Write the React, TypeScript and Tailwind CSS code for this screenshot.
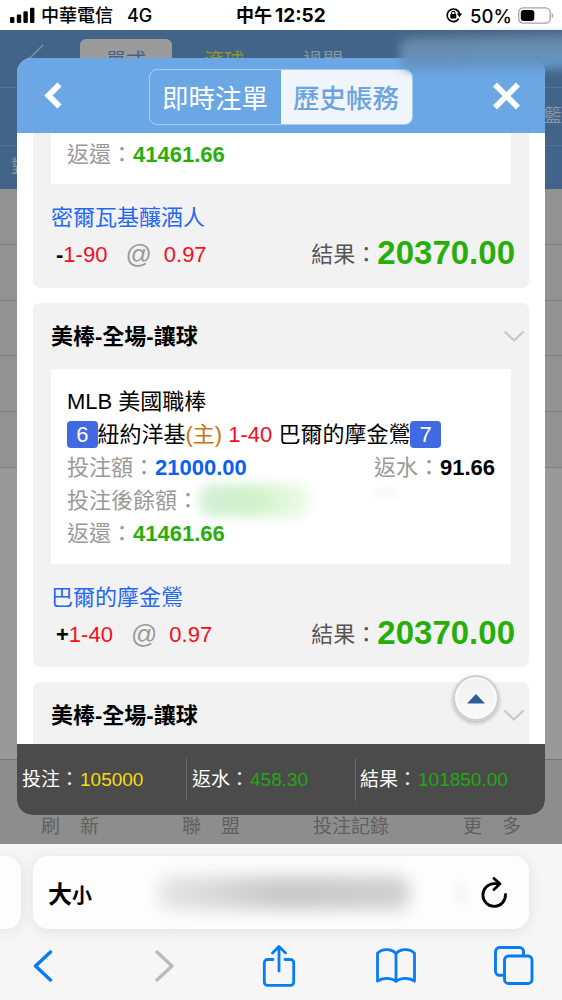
import type { ReactNode } from "react";

const TEXT = "font-['Liberation_Sans','Noto_Sans_CJK_TC',sans-serif]";
const SYSTEM = "font-['Inter','Noto_Sans_CJK_TC',sans-serif]";

type Bet = { team: string; sign: string; line: string; odds: string; result: string };

const BETS: Bet[] = [
  { team: "密爾瓦基釀酒人", sign: "-", line: "1-90", odds: "0.97", result: "20370.00" },
  { team: "巴爾的摩金鶯", sign: "+", line: "1-40", odds: "0.97", result: "20370.00" },
];

const TOTALS = [
  { label: "投注", value: "105000", color: "text-[#f5dc0c]", box: "w-[169px] pl-[5px]" },
  { label: "返水", value: "458.30", color: "text-[#22a811]", box: "w-[169px] pl-[5px] border-l border-[#686868]" },
  { label: "結果", value: "101850.00", color: "text-[#22a811]", box: "flex-1 pl-1 border-l border-[#686868]" },
];

function StatusBar() {
  return (
    <header className={`${SYSTEM} flex h-[30px] items-center bg-white text-[18px] leading-[30px] text-black`}>
      <div className="flex w-[236px] items-center pl-[10px]">
        <svg width="25" height="16" viewBox="0 0 25 16">
          <rect x="0" y="10" width="4.4" height="6" rx="1.2" />
          <rect x="6.8" y="7.5" width="4.4" height="8.5" rx="1.2" />
          <rect x="13.4" y="4.2" width="4.4" height="11.8" rx="1.2" />
          <rect x="20" y="0.8" width="4.4" height="15.2" rx="1.2" />
        </svg>
        <span className="ml-[6px] mt-[2px] font-medium">中華電信</span>
        <span className="ml-[14px] mt-[2px] font-medium">4G</span>
      </div>
      <div className="mt-[2px] flex w-[209px] items-center whitespace-nowrap">
        <span className="text-[18px] font-semibold">中午</span>
        <span className="ml-[3px] text-[19px] font-bold">12:52</span>
      </div>
      <svg width="18" height="16" viewBox="0 0 18 16" fill="none" stroke="black" strokeWidth="1.7">
        <path d="M13.700 11.800A6.300 6.300 0 1 1 14.600 7" />
        <path d="M11.800 6.500h5.400l-2.700 3.700z" fill="black" stroke="none" />
        <rect x="5.3" y="7" width="6" height="4.4" rx="0.7" fill="black" stroke="none" />
        <path d="M6.600 7.200V6a1.700 1.700 0 0 1 3.400 0v1.200" strokeWidth="1.1" />
      </svg>
      <span className="ml-[7px] mt-px w-[48px] text-[18.5px] font-medium">50%</span>
      <svg width="36" height="17" viewBox="0 0 36 17">
        <rect x="0.7" y="0.9" width="31.5" height="15.2" rx="4.6" fill="white" stroke="#a2a2a2" strokeWidth="1.3" />
        <rect x="2.8" y="2.9" width="13.5" height="11.2" rx="3" />
        <path d="M33.700 6v5.200c2-.8 2-4.400 0-5.200z" fill="#a2a2a2" />
      </svg>
    </header>
  );
}

function DimmedPage() {
  return (
    <div className={`${TEXT} flex h-[814px] flex-col bg-[#999]`}>
      <div className="flex h-[159px] flex-col bg-[#436489] text-[20px] text-[#8795a4]">
        <div className="flex h-[58px] border-b border-[#537394]">
          <svg className="ml-[26px] mt-[14px]" width="18" height="32" viewBox="0 0 18 32" fill="none" stroke="#7b91a8" strokeWidth="1.5">
            <path d="M17 1L2 16l15 15" />
          </svg>
          <div className="ml-[36px] mt-[9px] flex h-[40px] w-[92px] justify-center rounded-[6px] bg-[#9b9b9b] text-[#436489]">
            <span className="mt-[7px]">單式</span>
          </div>
          <span className="ml-[32px] mt-[16px] text-[#8f9921]">滾球</span>
          <span className="ml-[59px] mt-[16px]">過關</span>
        </div>
        <div className="flex h-[58px] items-center justify-end border-b border-[#537394] text-[18px]">籃</div>
        <div className="flex flex-1 items-center pl-[11px] text-[18px]">對</div>
      </div>
      <div className="h-[56px] border-b border-[#818181] bg-[#929292]" />
      <div className="h-[56px] border-b border-[#818181] bg-[#929292]" />
      <div className="h-[55px] border-b border-[#818181] bg-[#929292]" />
      <div className="h-[56px] border-b border-[#818181] bg-[#929292]" />
      <div className="h-[56px] border-b border-[#818181] bg-[#929292]" />
      <div className="flex-1" />
      <div className="flex h-[85px] items-end border-t border-[#737373] bg-[#8d8d8d] pb-[3px] text-[19px] leading-[28px] text-[#606060]">
        <span className="ml-[41px] w-[141px]">刷<span className="ml-[20px]">新</span></span>
        <span className="w-[131px]">聯<span className="ml-[20px]">盟</span></span>
        <span className="w-[150px]">投注記錄</span>
        <span>更<span className="ml-[20px]">多</span></span>
      </div>
    </div>
  );
}

function ModalHeader() {
  return (
    <div className="flex h-[75px] items-center bg-[#6ba7e5]">
      <svg className="ml-[27px]" width="19" height="27" viewBox="0 0 19 27" fill="none" stroke="white" strokeWidth="6">
        <path d="M15.500 2.500L4.500 13.500 15.500 24.500" />
      </svg>
      <div className="ml-[86px] mt-[2px] flex h-[56px] w-[264px] rounded-[8px] border border-[#a6cdf5] text-[26.5px] leading-[58px]">
        <div className="w-[131px] pl-[12px] text-white">即時注單</div>
        <div className="flex-1 rounded-r-[7px] bg-[#f0f5fb] pl-[12px] font-medium text-[#6ba4df]">歷史帳務</div>
      </div>
      <svg className="ml-[79px]" width="30" height="28" viewBox="0 0 30 28" fill="none" stroke="white" strokeWidth="5.6">
        <path d="M3 2.500l23 23M26 2.500l-23 23" />
      </svg>
    </div>
  );
}

function CardTitle() {
  return (
    <div className="flex h-[66px] items-center justify-between pl-[18px] pr-[4px] text-[22px] font-bold">
      <span>美棒-全場-讓球</span>
      <svg width="22" height="13" viewBox="0 0 22 13" fill="none" stroke="#c9c9c9" strokeWidth="2.3">
        <path d="M1.500 1.500L11 10.500l9.500-9" />
      </svg>
    </div>
  );
}

function Badge({ children }: { children: ReactNode }) {
  return (
    <span className="inline-block h-[27px] w-[30.5px] rounded-[4px] bg-[#4169e1] text-center leading-[27px] text-white">
      {children}
    </span>
  );
}

function Returned() {
  return (
    <div className="text-[#999]">
      返還：<b className="text-[#28ae0b]">41461.66</b>
    </div>
  );
}

function BetFooter({ bet }: { bet: Bet }) {
  return (
    <div className="px-[18px] pb-[17px] pt-[17px] leading-[33px]">
      <div className="text-[#2468f2]">{bet.team}</div>
      <div className="mt-[4px] flex h-[33px] items-center">
        <b className="ml-[5px]">{bet.sign}</b>
        <span className="text-[#f80d1b]">{bet.line}</span>
        <span className="ml-[18px] text-[26px] text-[#999]">@</span>
        <span className="ml-[12px] text-[#f80d1b]">{bet.odds}</span>
        <span className="ml-auto text-[#555]">結果：</span>
        <b className="-mr-[4px] -mt-[4px] text-[33px] text-[#28ae0b]">{bet.result}</b>
      </div>
    </div>
  );
}

function BetDetails() {
  return (
    <div className="mx-[18px] h-[195px] bg-white px-[16px] pt-[16px] leading-[33px]">
      <div className="h-[33px]">MLB 美國職棒</div>
      <div className="flex h-[33px] items-center whitespace-pre">
        <Badge>6</Badge>
        紐約洋基
        <span className="text-[#cb7411]">(主)</span>
        <span className="text-[#f80d1b]"> 1-40 </span>
        巴爾的摩金鶯
        <Badge>7</Badge>
      </div>
      <div className="flex h-[33px] justify-between text-[#999]">
        <span>投注額：<b className="text-[#0b5ff2]">21000.00</b></span>
        <span>返水：<b className="text-black">91.66</b></span>
      </div>
      <div className="flex h-[33px] items-center text-[#999]">
        投注後餘額：
        <div className="h-[33px] w-[112px] rounded-[14px] bg-gradient-to-r from-[#d3efd8] via-[#d0f2c8] to-[#f0fbed] blur-[6px]" />
        <div className="ml-[62px] mt-[-16px] h-[7px] w-[26px] bg-[#f8f8f8] blur-[3px]" />
      </div>
      <Returned />
    </div>
  );
}

function HistoryModal() {
  return (
    <section className={`${TEXT} absolute left-[17px] top-[58px] flex h-[757px] w-[528px] flex-col overflow-hidden rounded-[15px] bg-white text-[22px] text-black`}>
      <ModalHeader />
      <div className="flex h-[611px] flex-col gap-[15px] overflow-hidden px-[16px]">
        <article className="h-[155px] shrink-0 rounded-b-[7px] bg-[#f2f2f2]">
          <div className="mx-[18px] h-[51px] bg-white px-[16px] pt-[5px] leading-[33px]">
            <Returned />
          </div>
          <BetFooter bet={BETS[0]} />
        </article>
        <article className="h-[364px] shrink-0 rounded-[7px] bg-[#f2f2f2]">
          <CardTitle />
          <BetDetails />
          <BetFooter bet={BETS[1]} />
        </article>
        <article className="h-[90px] shrink-0 rounded-[7px] bg-[#f2f2f2]">
          <CardTitle />
        </article>
      </div>
      <div className="flex flex-1 items-center bg-[#4b4b4b] text-[19px]">
        {TOTALS.map((t) => (
          <div key={t.label} className={`${t.box} h-[43px] leading-[43px] text-white`}>
            {t.label}：<span className={`${t.color} ml-px`}>{t.value}</span>
          </div>
        ))}
      </div>
      <button className="absolute left-[436px] top-[617px] flex h-[46px] w-[46px] items-center justify-center rounded-full border-2 border-[#cfcfd1] bg-gradient-to-b from-[#f0f0f1] to-[#fafafa] shadow-[0_2px_4px_rgba(0,0,0,0.25),inset_0_0_3px_1px_white]">
        <svg width="20" height="11" viewBox="0 0 20 11" fill="#2d5c98">
          <path d="M1 10.500L10 1l9 9.500z" />
        </svg>
      </button>
    </section>
  );
}

function BrowserBar() {
  return (
    <footer className={`${SYSTEM} h-[156px] bg-[#f6f6f7] pt-[12px]`}>
      <div className="flex gap-[12px]">
        <div className="h-[73px] w-[21px] rounded-r-[15px] bg-[#fdfdfd] shadow-[0_2px_14px_rgba(0,0,0,0.09)]" />
        <div className="flex h-[73px] w-[496px] items-center rounded-[15px] bg-[#fdfdfd] pl-[15px] shadow-[0_2px_14px_rgba(0,0,0,0.09)]">
          <span className="mt-[4px] w-[110px] text-[24px] font-bold">大<span className="text-[20px]">小</span></span>
          <div className="h-[34px] w-[252px] rounded-[14px] bg-gradient-to-r from-[#e6e6e6] via-[#c8c8c8] to-[#d0d0d0] blur-[8px]" />
          <div className="ml-[47px] h-[20px] w-[8px] bg-[#f3f3f3] blur-[4px]" />
          <svg className="ml-[15px]" width="28" height="32" viewBox="0 0 28 32" fill="none" stroke="black" strokeWidth="2.8" strokeLinecap="round" strokeLinejoin="round">
            <path d="M25.500 17.500A11.300 11.300 0 1 1 14.200 6.700h5" />
            <path d="M14 1.500l6 5.300-6 5.800" />
          </svg>
        </div>
      </div>
      <div className="mt-[12px] flex h-[50px] items-center text-[#087cf5]">
        <svg className="ml-[32px]" width="22" height="34" viewBox="0 0 22 34" fill="none" stroke="currentColor" strokeWidth="3.5" strokeLinecap="round" strokeLinejoin="round">
          <path d="M18.500 3L3.500 17 18.500 31" />
        </svg>
        <svg className="ml-[100px] text-[#bcbcbd]" width="22" height="34" viewBox="0 0 22 34" fill="none" stroke="currentColor" strokeWidth="3.5" strokeLinecap="round" strokeLinejoin="round">
          <path d="M3 3l15 14L3 31" />
        </svg>
        <svg className="ml-[85px]" width="36" height="44" viewBox="0 0 36 44" fill="none" stroke="currentColor" strokeWidth="2.8" strokeLinecap="round" strokeLinejoin="round">
          <path d="M12 15.500H6.500a3.200 3.200 0 0 0-3.200 3.200v19.500a3.200 3.200 0 0 0 3.200 3.200h23a3.200 3.200 0 0 0 3.200-3.200V18.700a3.200 3.200 0 0 0-3.200-3.200H24" />
          <path d="M18 27V3M11.500 9L18 2.500 24.500 9" />
        </svg>
        <svg className="ml-[78px]" width="42" height="38" viewBox="0 0 42 38" fill="none" stroke="currentColor" strokeWidth="2.8" strokeLinejoin="round">
          <path d="M21 7.200C18 1.900 8 .8 2.500 6.200v28C7 30.600 16.500 30.200 21 34.500 25.500 30.200 35 30.600 39.500 34.200v-28C34 .8 24 1.900 21 7.200zM21 7.200v27" />
        </svg>
        <svg className="ml-[76px]" width="42" height="42" viewBox="0 0 42 42" fill="none" stroke="currentColor" strokeWidth="2.9">
          <path d="M10.500 30.300H6.500a4 4 0 0 1-4-4V6.500a4 4 0 0 1 4-4h20a4 4 0 0 1 4 4v4" />
          <rect x="11.500" y="11" width="27.500" height="27.500" rx="4" />
        </svg>
      </div>
    </footer>
  );
}

export default function App() {
  return (
    <main className="relative h-[1000px] w-[562px] overflow-hidden bg-white">
      <StatusBar />
      <DimmedPage />
      <BrowserBar />
      <HistoryModal />
      <div className="absolute left-[400px] top-[36px] h-[34px] w-[175px] -rotate-1 rounded-[12px] bg-gradient-to-b from-[#66859e] to-[#6499ce] blur-[5px]" />
    </main>
  );
}
